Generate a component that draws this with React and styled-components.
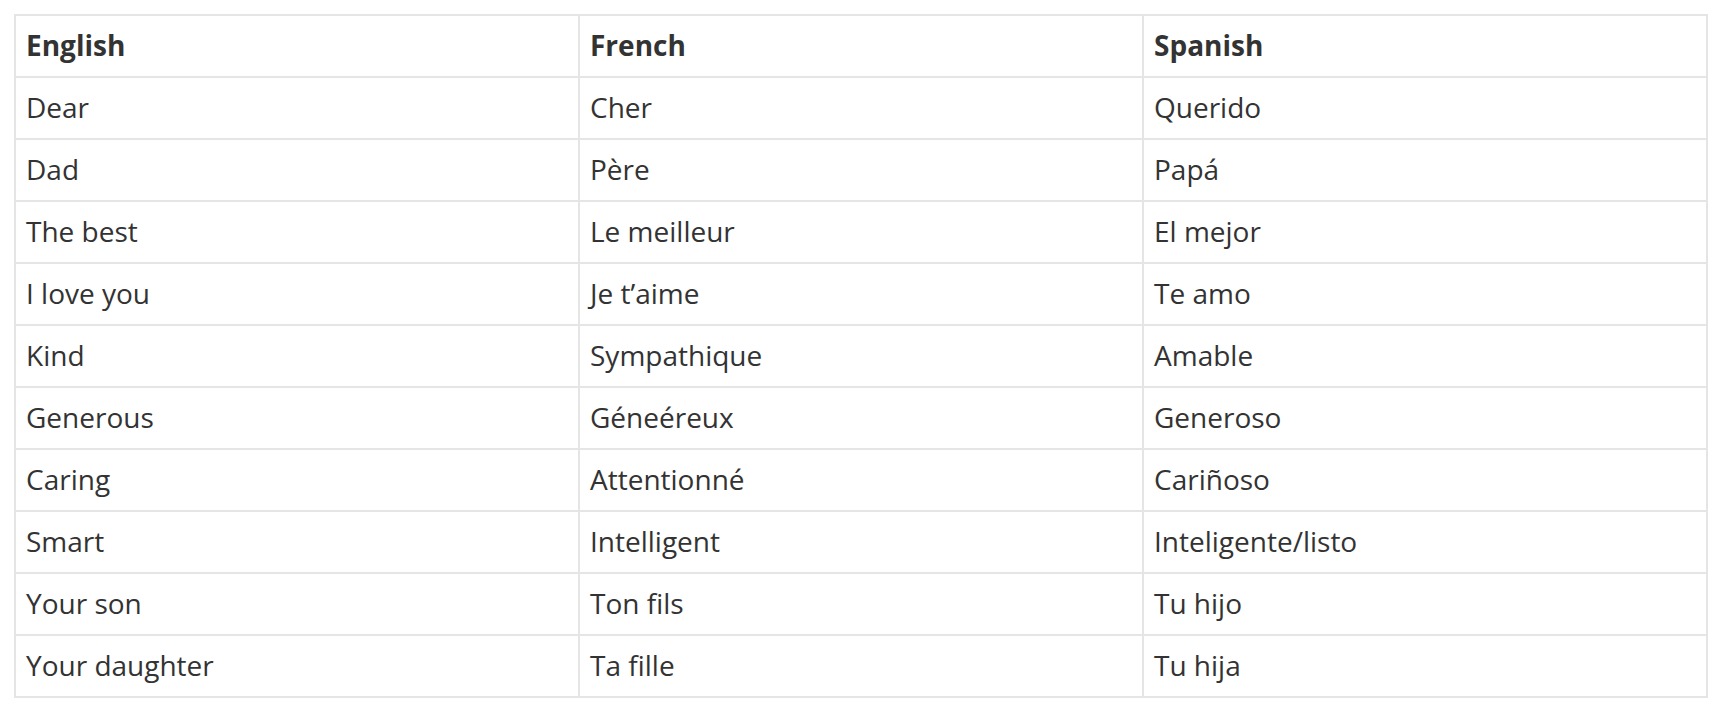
import React from 'react'
import styled, { createGlobalStyle } from 'styled-components'

const GlobalStyle = createGlobalStyle`
  html, body {
    margin: 0;
    padding: 0;
    background: #fff;
  }
  body {
    font-family: "Open Sans", "Liberation Sans", sans-serif;
    color: #333;
  }
`

const Page = styled.div`
  padding: 14px 16px 14px 14px;
`

const Table = styled.table`
  width: 1694px;
  border-collapse: separate;
  border-spacing: 0;
  table-layout: fixed;
  border-top: 2px solid #e5e5e5;
  border-left: 2px solid #e5e5e5;
`

const Cell = styled.td`
  border-right: 2px solid #e5e5e5;
  border-bottom: 2px solid #e5e5e5;
  padding: 10px 10px 12px;
  font-size: 28px;
  line-height: 38px;
  font-weight: ${p => (p.$head ? 700 : 400)};
  color: #333;
  text-align: left;
  vertical-align: top;
  white-space: nowrap;
`

const rows = [
  ['Dear', 'Cher', 'Querido'],
  ['Dad', 'Père', 'Papá'],
  ['The best', 'Le meilleur', 'El mejor'],
  ['I love you', 'Je t’aime', 'Te amo'],
  ['Kind', 'Sympathique', 'Amable'],
  ['Generous', 'Géneéreux', 'Generoso'],
  ['Caring', 'Attentionné', 'Cariñoso'],
  ['Smart', 'Intelligent', 'Inteligente/listo'],
  ['Your son', 'Ton fils', 'Tu hijo'],
  ['Your daughter', 'Ta fille', 'Tu hija'],
]

export default function App() {
  return (
    <>
      <GlobalStyle />
      <Page>
        <Table>
          <thead>
            <tr>
              <Cell as="th" $head>English</Cell>
              <Cell as="th" $head>French</Cell>
              <Cell as="th" $head>Spanish</Cell>
            </tr>
          </thead>
          <tbody>
            {rows.map((r, i) => (
              <tr key={i}>
                {r.map((t, j) => (
                  <Cell key={j}>{t}</Cell>
                ))}
              </tr>
            ))}
          </tbody>
        </Table>
      </Page>
    </>
  )
}
